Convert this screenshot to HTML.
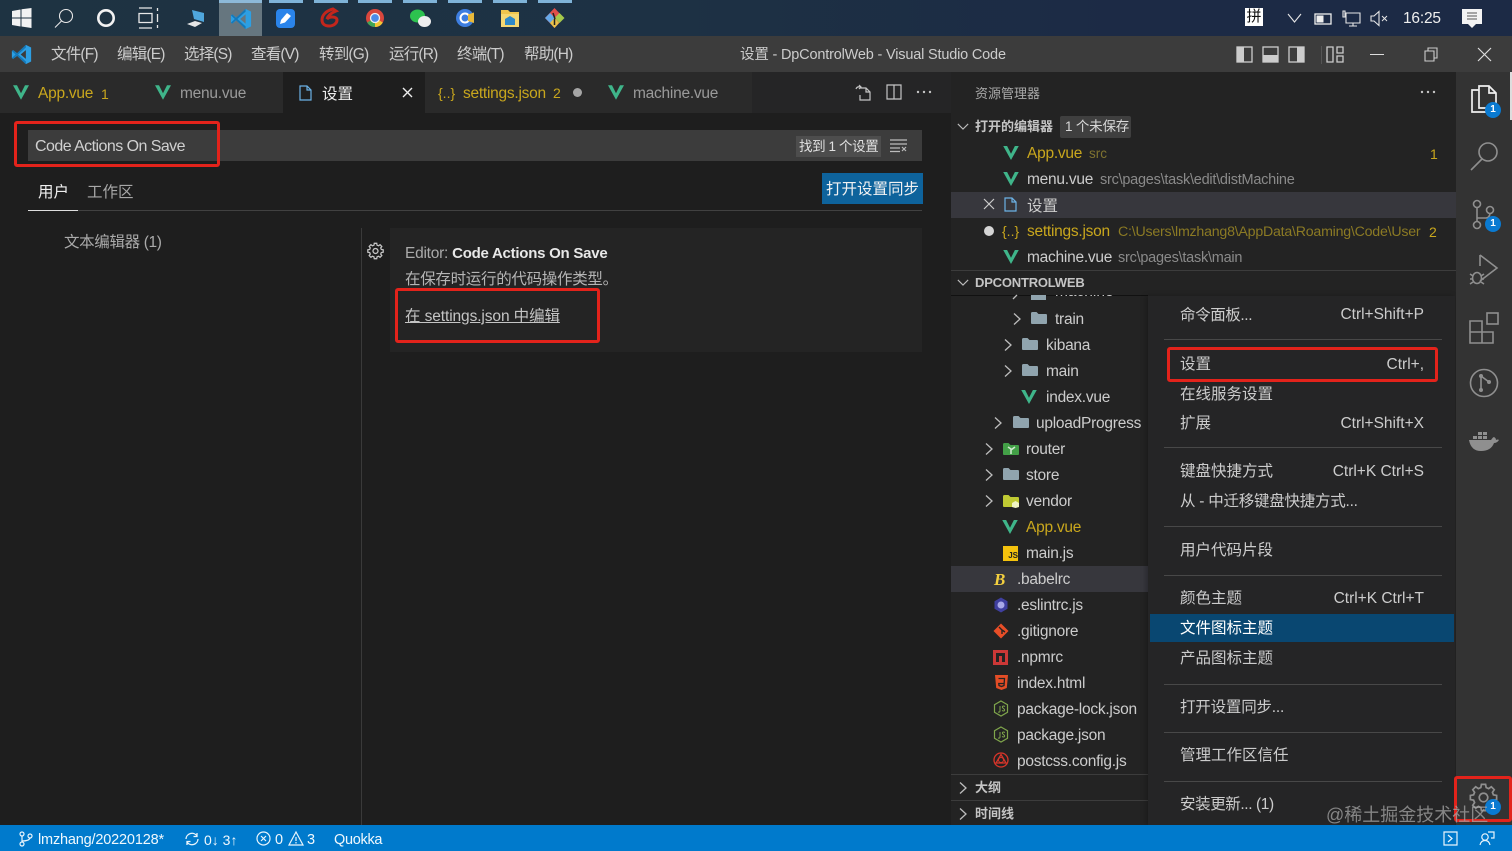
<!DOCTYPE html>
<html lang="zh-CN"><head><meta charset="utf-8"><title>设置 - DpControlWeb - Visual Studio Code</title>
<style>
html,body{margin:0;padding:0;background:#1e1e1e}
#r{position:relative;width:1512px;height:851px;overflow:hidden;background:#1e1e1e;font-family:"Liberation Sans","Noto Sans CJK SC",sans-serif;font-size:15.5px;color:#ccc}
#r div,#r svg{position:absolute}
.t{white-space:nowrap;line-height:22px;height:22px;margin-top:1px}
.y{color:#c9a71d}.d{color:#8a8a8a;font-size:14.5px}.b{font-weight:bold;font-size:13px;margin-top:0}
.k{text-align:right}
.l{letter-spacing:-.25px}
.z{margin-top:0}
.m{margin-top:0;letter-spacing:-.8px}
.c2{margin-top:2px}
.s{height:1px;background:#484848;left:1164px;width:278px}
.red{border:3.5px solid #e3231b;border-radius:3px;box-sizing:border-box}
svg{overflow:visible}
.ic{fill:none;stroke:#8f8f8f;stroke-width:1.6}
.ch{fill:none;stroke:#bdbdbd;stroke-width:1.3}
</style></head><body><div id="r">
<svg width="0" height="0" style="position:absolute"><defs>
<symbol id="v" viewBox="0 0 20 18"><path d="M0 0h5l5 10 5-10h5L10 18z" fill="#3fb58a"/></symbol>
<symbol id="f" viewBox="0 0 18 14"><path d="M1 2.5Q1 1 2.500 1h4l2 2h7.500Q17 3 17 4.500v7.500q0 1-1 1H2q-1 0-1-1z" fill="#90a4ae"/></symbol>
<symbol id="c" viewBox="0 0 10 14"><path d="M2 1.500l6 5.500-6 5.500" fill="none" stroke="#bdbdbd" stroke-width="1.300"/></symbol>
<symbol id="d" viewBox="0 0 14 10"><path d="M1 2l6 6 6-6" fill="none" stroke="#bdbdbd" stroke-width="1.300"/></symbol>
<symbol id="vs" viewBox="0 0 24 24"><path d="M17 1l6 3v16l-6 3-10-9.500L2.500 17 1 16v-8l1.500-1L7 10.500zM17 7l-6 5 6 5z" fill="#2d9fe3"/><path d="M1 8l1.500-1 14.500 13v3L1 8z" fill="#1578b8"/><path d="M1 16l1.500 1L17 4V1z" fill="#1578b8"/></symbol>
<symbol id="g" viewBox="0 0 24 24"><path d="M9.800 3.790L10.280 1.130H13.720L14.200 3.790L16.250 4.640L18.470 3.100L20.900 5.530L19.360 7.750L20.210 9.800L22.870 10.280V13.720L20.210 14.200L19.360 16.250L20.900 18.470L18.470 20.900L16.250 19.360L14.200 20.210L13.720 22.870H10.280L9.800 20.210L7.750 19.360L5.530 20.900L3.100 18.470L4.640 16.250L3.790 14.200L1.130 13.720V10.280L3.790 9.800L4.640 7.750L3.100 5.530L5.530 3.100L7.750 4.640zM12 8.500a3.500 3.500 0 1 0 .01 0z" fill="none"/></symbol>
</defs></svg>

<!-- taskbar -->
<div style="left:0;top:0;width:1512px;height:36px;background:linear-gradient(90deg,#1e3342 0%,#1d3144 45%,#1c2a45 75%,#1c2a45 100%)"></div>
<div style="left:219px;top:0;width:43px;height:36px;background:#66767f"></div>
<div style="left:219px;top:0;width:43px;height:3px;background:#8db9d8"></div>
<div style="left:269px;top:0;width:34px;height:3px;background:#7fb3d8"></div>
<div style="left:314px;top:0;width:34px;height:3px;background:#7fb3d8"></div>
<div style="left:358px;top:0;width:34px;height:3px;background:#7fb3d8"></div>
<div style="left:403px;top:0;width:34px;height:3px;background:#7fb3d8"></div>
<div style="left:448px;top:0;width:34px;height:3px;background:#7fb3d8"></div>
<div style="left:493px;top:0;width:34px;height:3px;background:#7fb3d8"></div>
<div style="left:538px;top:0;width:34px;height:3px;background:#7fb3d8"></div>
<svg style="left:12px;top:8px" width="20" height="20"><path d="M0 3l8.500-1.500V9.500H0zM9.500 1.300L19.500 0v9.500h-10zM0 10.500h8.500v8L0 17zM9.500 10.500h10V20l-10-1.500z" fill="#f2f2f2"/></svg>
<svg style="left:54px;top:8px" width="20" height="20"><circle cx="12" cy="8" r="6.500" fill="none" stroke="#e8e8e8" stroke-width="1.100"/><path d="M7.500 13L1 19.500" stroke="#e8e8e8" stroke-width="1.100"/></svg>
<svg style="left:96px;top:8px" width="20" height="20"><circle cx="10" cy="10" r="7.700" fill="none" stroke="#f2f2f2" stroke-width="2.600"/></svg>
<svg style="left:138px;top:7px" width="22" height="22"><path d="M1 1h13M1 21h13M1 6.500h13v9H1zM19.500 1v3M19.500 7v8M19.500 18v3" fill="none" stroke="#e8e8e8" stroke-width="1.300"/></svg>
<svg style="left:186px;top:9px" width="20" height="19"><path d="M6 1l12 3v9L8 10z" fill="#4fa6dc"/><path d="M1 15l8-3 7 2-7 4z" fill="#e6e6e6"/></svg>
<svg style="left:230px;top:8px" width="22" height="22"><use href="#vs"/></svg>
<div style="left:276px;top:9px;width:19px;height:19px;background:#2a84ea;border-radius:4px"></div>
<svg style="left:279px;top:12px" width="13" height="13"><path d="M1 12l1-4 6-7 4 3-6 6.500z" fill="#fff"/></svg>
<svg style="left:320px;top:8px" width="20" height="20"><path d="M13 1C6 3 2 7 2 12c0 4 3 6 7 6 5 0 8-3 8-6 0-2-2-3-5-3-2 0-4 1-5 2 1-3 4-6 9-8z" fill="none" stroke="#c3261c" stroke-width="3"/></svg>
<svg style="left:366px;top:9px" width="18" height="18"><circle cx="9" cy="9" r="9" fill="#d9473d"/><path d="M9 9L1.200 13.500A9 9 0 0 0 9 18z" fill="#3ea657"/><path d="M9 9l7.800 4.500A9 9 0 0 1 9 18z" fill="#f4c534"/><circle cx="9" cy="9" r="4.500" fill="#4b8be8" stroke="#eee" stroke-width="1.300"/></svg>
<svg style="left:410px;top:9px" width="21" height="19"><ellipse cx="7.500" cy="7" rx="7.500" ry="6.500" fill="#2dc24f"/><ellipse cx="14.500" cy="12.500" rx="6.500" ry="5.500" fill="#eeeeee"/></svg>
<svg style="left:456px;top:9px" width="18" height="18"><circle cx="9" cy="9" r="9" fill="#3d7ee0"/><circle cx="9" cy="9" r="4.500" fill="none" stroke="#fff" stroke-width="2"/><path d="M12 5.500L18 3.500V14l-6-2z" fill="#e8b93a"/></svg>
<svg style="left:501px;top:9px" width="18" height="18"><path d="M0 1h7l2 2h9v15H0z" fill="#efc54d"/><rect x="0" y="5" width="18" height="13" fill="#f4d772"/><path d="M4 16v-6l5-3 5 3v6z" fill="#2e89c9"/></svg>
<svg style="left:545px;top:8px" width="19" height="20"><path d="M9.500 0L19 10l-9.500 10L0 10z" fill="#e04f4a"/><path d="M0 10l5-5 5 5-5 5z" fill="#66a9e9"/><path d="M9.500 10l5-5 5 5-5 5z" fill="#a5c94b"/><path d="M5 15l4.500-5 4.500 5-4.500 5z" fill="#e9c24a"/><path d="M8 5l2 6M9.500 11v6" stroke="#222" stroke-width="1.500"/></svg>
<div style="left:1245px;top:8px;width:18px;height:18px;background:#fff;color:#111;font-size:15px;line-height:18px;text-align:center">拼</div>
<svg style="left:1287px;top:13px" width="15" height="10"><path d="M1 1l6.500 8L14 1" fill="none" stroke="#e6e6e6" stroke-width="1.100"/></svg>
<svg style="left:1314px;top:13px" width="18" height="12"><rect x="1" y="1" width="16" height="10" fill="none" stroke="#eee" stroke-width="1.300"/><rect x="2.500" y="2.500" width="7" height="7" fill="#eee"/></svg>
<svg style="left:1342px;top:10px" width="19" height="17"><path d="M4 3h14v10H4zM3 1v6H1V1zM11 13v3M7 16h8" fill="none" stroke="#e6e6e6" stroke-width="1.100"/></svg>
<svg style="left:1370px;top:10px" width="18" height="17"><path d="M1 6h3l5-4.500v14L4 11H1z" fill="none" stroke="#e6e6e6" stroke-width="1.100"/><path d="M12 6l5 5M17 6l-5 5" stroke="#e6e6e6" stroke-width="1"/></svg>
<div class="t" style="left:1403px;top:7px;color:#eee;font-size:15.500px;letter-spacing:-.2px">16:25</div>
<svg style="left:1462px;top:9px" width="20" height="20"><path d="M0 0h20v15h-6l-4 4-4-4H0z" fill="#f3f3f3"/><path d="M5 4h10M5 7h10M5 10h10" stroke="#555" stroke-width="1"/></svg>

<!-- title bar -->
<div style="left:0;top:36px;width:1512px;height:36px;background:#3c3c3c"></div>
<svg style="left:11px;top:44px" width="21" height="21"><use href="#vs"/></svg>
<div class="t m" style="left:51px;top:44px">文件(F)</div>
<div class="t m" style="left:117px;top:44px">编辑(E)</div>
<div class="t m" style="left:184px;top:44px">选择(S)</div>
<div class="t m" style="left:251px;top:44px">查看(V)</div>
<div class="t m" style="left:319px;top:44px">转到(G)</div>
<div class="t m" style="left:389px;top:44px">运行(R)</div>
<div class="t m" style="left:457px;top:44px">终端(T)</div>
<div class="t m" style="left:524px;top:44px">帮助(H)</div>
<div class="t z" style="left:740px;top:44px;font-size:14.500px;letter-spacing:-.18px">设置 - DpControlWeb - Visual Studio Code</div>
<svg style="left:1236px;top:46px" width="70" height="18"><rect x="1" y="1" width="15" height="15" fill="none" stroke="#ccc" stroke-width="1.300"/><rect x="1" y="1" width="7" height="15" fill="#ccc"/><rect x="27" y="1" width="15" height="15" fill="none" stroke="#ccc" stroke-width="1.300"/><rect x="27" y="9" width="15" height="7" fill="#ccc"/><rect x="53" y="1" width="15" height="15" fill="none" stroke="#ccc" stroke-width="1.300"/><rect x="61" y="1" width="7" height="15" fill="#ccc"/></svg>
<div style="left:1321px;top:46px;width:1px;height:18px;background:#555"></div>
<svg style="left:1326px;top:46px" width="18" height="18"><path d="M1 1h6v15H1zM11 1h6v6h-6zM11 10h6v6h-6z" fill="none" stroke="#ccc" stroke-width="1.300"/></svg>
<div style="left:1370px;top:54px;width:14px;height:1px;background:#ddd"></div>
<svg style="left:1424px;top:47px" width="15" height="15"><path d="M1 4h9v10H1zM4 4V1h9v10h-3" fill="none" stroke="#ccc" stroke-width="1.100"/></svg>
<svg style="left:1477px;top:47px" width="15" height="15"><path d="M1 1l13 13M14 1L1 14" stroke="#ddd" stroke-width="1.200"/></svg>

<!-- tabs -->
<div style="left:0;top:72px;width:951px;height:41px;background:#252526"></div>
<div style="left:142px;top:72px;width:1px;height:41px;background:#1e1e1e"></div>
<div style="left:283px;top:72px;width:142px;height:41px;background:#1e1e1e"></div>
<div style="left:597px;top:72px;width:155px;height:41px;background:#2a2a2a"></div>
<div style="left:142px;top:72px;width:141px;height:41px;background:#2a2a2a"></div>
<div style="left:0;top:72px;width:142px;height:41px;background:#2a2a2a"></div>
<div style="left:425px;top:72px;width:172px;height:41px;background:#2a2a2a"></div>
<svg style="left:13px;top:85px" width="16" height="15"><use href="#v"/></svg>
<div class="t y l" style="left:38px;top:82px">App.vue</div>
<div class="t y" style="left:101px;top:82px;font-size:14px">1</div>
<svg style="left:155px;top:85px" width="16" height="15"><use href="#v"/></svg>
<div class="t l" style="left:180px;top:82px;color:#9a9a9a">menu.vue</div>
<svg style="left:299px;top:85px" width="13" height="16"><path d="M1 1h7l4 4v10H1zM8 1v4h4" fill="none" stroke="#6cb2e6" stroke-width="1.200"/></svg>
<div class="t c2" style="left:322px;top:82px;color:#eee">设置</div>
<svg style="left:402px;top:87px" width="11" height="11"><path d="M1 1l9 9M10 1l-9 9" stroke="#eee" stroke-width="1.400"/></svg>
<div class="t y" style="left:438px;top:81px;font-size:14px">{..}</div>
<div class="t y l" style="left:463px;top:82px">settings.json</div>
<div class="t y" style="left:553px;top:81px;font-size:14px">2</div>
<div style="left:573px;top:88px;width:9px;height:9px;border-radius:50%;background:#a5a5a5"></div>
<svg style="left:608px;top:85px" width="16" height="15"><use href="#v"/></svg>
<div class="t l" style="left:633px;top:82px;color:#9a9a9a">machine.vue</div>
<svg style="left:854px;top:84px" width="18" height="17"><path d="M6 4h6l4 4v8H6v-5M2 5q1-3 5-2M5 1l2 2-2 2M12 4v4h4" fill="none" stroke="#c5c5c5" stroke-width="1.200"/></svg>
<svg style="left:886px;top:84px" width="16" height="16"><path d="M1 1h14v14H1zM8 1v14" fill="none" stroke="#c5c5c5" stroke-width="1.200"/></svg>
<svg style="left:916px;top:90px" width="16" height="4"><circle cx="2" cy="2" r="1.200" fill="#c5c5c5"/><circle cx="8" cy="2" r="1.200" fill="#c5c5c5"/><circle cx="14" cy="2" r="1.200" fill="#c5c5c5"/></svg>

<!-- settings editor -->
<div style="left:28px;top:130px;width:894px;height:31px;background:#3c3c3c"></div>
<div class="t" style="left:35px;top:135px;font-size:16px;color:#d0d0d0;letter-spacing:-.55px">Code Actions On Save</div>
<div style="left:796px;top:136px;width:85px;height:21px;background:#4d4d4d"></div>
<div class="t" style="left:799px;top:135px;font-size:13.500px;color:#e0e0e0;letter-spacing:-.4px">找到 1 个设置</div>
<svg style="left:890px;top:139px" width="18" height="13"><path d="M0 1h17M0 5h17M0 9h10M0 12.500h10M12 8l4 4M16 8l-4 4" stroke="#bbb" stroke-width="1.200" fill="none"/></svg>
<div style="left:822px;top:173px;width:101px;height:31px;background:#0e639c"></div>
<div class="t c2" style="left:826px;top:177px;color:#f2f2f2">打开设置同步</div>
<div class="t c2" style="left:38px;top:180px;color:#f0f0f0">用户</div>
<div class="t c2" style="left:87px;top:180px;color:#a8a8a8">工作区</div>
<div style="left:28px;top:210px;width:894px;height:1px;background:#414141"></div>
<div style="left:28px;top:210px;width:50px;height:1px;background:#dedede"></div>
<div class="t c2" style="left:64px;top:230px;color:#aaa;letter-spacing:-.35px">文本编辑器 (1)</div>
<div style="left:361px;top:228px;width:1px;height:597px;background:#3a3a3a"></div>
<div style="left:390px;top:228px;width:532px;height:124px;background:#242424"></div>
<svg style="left:367px;top:242px;stroke:#c5c5c5;stroke-width:1.800" width="17" height="18"><use href="#g"/></svg>
<div class="t" style="left:405px;top:242px;color:#aaa;letter-spacing:-.25px">Editor: <span style="color:#e8e8e8;font-weight:bold;font-size:15px">Code Actions On Save</span></div>
<div class="t c2" style="left:405px;top:267px;color:#b5b5b5;letter-spacing:-.3px">在保存时运行的代码操作类型。</div>
<div class="t c2" style="left:405px;top:304px;color:#c5c5c5;text-decoration:underline;letter-spacing:-.1px">在 settings.json 中编辑</div>
<div class="red" style="left:14px;top:121px;width:206px;height:46px"></div>
<div class="red" style="left:395px;top:288px;width:205px;height:55px"></div>

<!-- sidebar -->
<div style="left:951px;top:72px;width:505px;height:753px;background:#232323"></div>
<div class="t" style="left:975px;top:82px;font-size:13px;color:#aaa">资源管理器</div>
<svg style="left:1420px;top:90px" width="16" height="4"><circle cx="2" cy="2" r="1.200" fill="#c5c5c5"/><circle cx="8" cy="2" r="1.200" fill="#c5c5c5"/><circle cx="14" cy="2" r="1.200" fill="#c5c5c5"/></svg>
<svg style="left:957px;top:122px" width="12" height="9"><use href="#d"/></svg>
<div class="t b" style="left:975px;top:116px;color:#c4c4c4">打开的编辑器</div>
<div style="left:1060px;top:116px;width:71px;height:22px;background:#3f3f3f;border-radius:2px"></div>
<div class="t z" style="left:1065px;top:116px;font-size:13.500px;color:#d8d8d8;letter-spacing:-.2px">1 个未保存</div>
<div style="left:951px;top:192px;width:505px;height:26px;background:#37373d"></div>

<svg style="left:1003px;top:146px" width="16" height="14"><use href="#v"/></svg>
<div class="t y l" style="left:1027px;top:142px">App.vue</div><div class="t d" style="left:1089px;top:142px;color:#7f7330;font-size:13.500px">src</div>
<div class="t y" style="left:1430px;top:142px;font-size:14px">1</div>
<svg style="left:1003px;top:172px" width="16" height="14"><use href="#v"/></svg>
<div class="t l" style="left:1027px;top:168px">menu.vue</div><div class="t d l" style="left:1100px;top:168px">src\pages\task\edit\distMachine</div>
<svg style="left:983px;top:198px" width="12" height="12"><path d="M1 1l10 10M11 1L1 11" stroke="#ccc" stroke-width="1.200"/></svg>
<svg style="left:1004px;top:197px" width="13" height="15"><path d="M1 1h7l4 4v9H1zM8 1v4h4" fill="none" stroke="#6cb2e6" stroke-width="1.200"/></svg>
<div class="t c2" style="left:1027px;top:194px">设置</div>
<div style="left:984px;top:226px;width:10px;height:10px;border-radius:50%;background:#d5d5d5"></div>
<div class="t y" style="left:1002px;top:219px;font-size:14px">{..}</div>
<div class="t y l" style="left:1027px;top:220px">settings.json</div><div class="t d" style="left:1118px;top:220px;color:#8b7a24;font-size:14.200px;letter-spacing:-.23px">C:\Users\lmzhang8\AppData\Roaming\Code\User</div>
<div class="t y" style="left:1429px;top:220px;font-size:14px">2</div>
<svg style="left:1003px;top:250px" width="16" height="14"><use href="#v"/></svg>
<div class="t l" style="left:1027px;top:246px">machine.vue</div><div class="t d l" style="left:1118px;top:246px">src\pages\task\main</div>
<div style="left:951px;top:270px;width:505px;height:1px;background:#3c3c3c"></div>
<svg style="left:957px;top:278px" width="12" height="9"><use href="#d"/></svg>
<div class="t b" style="left:975px;top:272px;color:#c4c4c4;letter-spacing:-.2px">DPCONTROLWEB</div>

<!-- tree -->
<div style="left:951px;top:295px;width:197px;height:1px;background:#111"></div>
<svg style="left:1012px;top:295px" width="8" height="5"><path d="M5 0L1 4" stroke="#bdbdbd" stroke-width="1.300"/></svg>
<div style="left:1031px;top:295px;width:15px;height:5px;background:#90a4ae"></div>
<div style="left:1055px;top:295px;width:60px;height:6px;overflow:hidden"><div class="t" style="left:0;top:-15px">machine</div></div>
<svg style="left:1012px;top:312px" width="10" height="14"><use href="#c"/></svg>
<svg style="left:1030px;top:311px" width="18" height="14"><use href="#f"/></svg>
<div class="t l" style="left:1055px;top:308px">train</div>
<svg style="left:1003px;top:338px" width="10" height="14"><use href="#c"/></svg>
<svg style="left:1021px;top:337px" width="18" height="14"><use href="#f"/></svg>
<div class="t l" style="left:1046px;top:334px">kibana</div>
<svg style="left:1003px;top:364px" width="10" height="14"><use href="#c"/></svg>
<svg style="left:1021px;top:363px" width="18" height="14"><use href="#f"/></svg>
<div class="t l" style="left:1046px;top:360px">main</div>
<svg style="left:1021px;top:390px" width="16" height="14"><use href="#v"/></svg>
<div class="t l" style="left:1046px;top:386px">index.vue</div>
<svg style="left:993px;top:416px" width="10" height="14"><use href="#c"/></svg>
<svg style="left:1012px;top:415px" width="18" height="14"><use href="#f"/></svg>
<div class="t l" style="left:1036px;top:412px">uploadProgress</div>
<svg style="left:984px;top:442px" width="10" height="14"><use href="#c"/></svg>
<svg style="left:1002px;top:442px" width="18" height="14" viewBox="0 0 18 14"><path d="M1 2.500Q1 1 2.500 1h4l2 2h7.500Q17 3 17 4.500v7.500q0 1-1 1H2q-1 0-1-1z" fill="#43a047"/><path d="M9 12V7l-3-2M9 8l4-3" stroke="#cfe8cf" stroke-width="1.600" fill="none"/></svg>
<div class="t l" style="left:1026px;top:438px">router</div>
<svg style="left:984px;top:468px" width="10" height="14"><use href="#c"/></svg>
<svg style="left:1002px;top:467px" width="18" height="14"><use href="#f"/></svg>
<div class="t l" style="left:1026px;top:464px">store</div>
<svg style="left:984px;top:494px" width="10" height="14"><use href="#c"/></svg>
<svg style="left:1002px;top:494px" width="18" height="14" viewBox="0 0 18 14"><path d="M1 2.500Q1 1 2.500 1h4l2 2h7.500Q17 3 17 4.500v7.500q0 1-1 1H2q-1 0-1-1z" fill="#c0ca33"/><path d="M10 9l3.500-2 3.500 2v4l-3.500 1-3.500-1z" fill="#f0f4c3"/></svg>
<div class="t l" style="left:1026px;top:490px">vendor</div>
<svg style="left:1002px;top:520px" width="16" height="14"><use href="#v"/></svg>
<div class="t y l" style="left:1026px;top:516px">App.vue</div>
<div style="left:1003px;top:546px;width:15px;height:15px;background:#f4c20d;color:#222;font-size:8px;font-weight:bold;line-height:19px;text-align:right">JS</div>
<div class="t l" style="left:1026px;top:542px">main.js</div>
<div style="left:951px;top:566px;width:197px;height:26px;background:#37373d"></div>
<div class="t" style="left:994px;top:568px;color:#f4d03f;font-style:italic;font-weight:bold;font-family:'Liberation Serif',serif;font-size:17px">B</div>
<div class="t l" style="left:1017px;top:568px">.babelrc</div>
<svg style="left:993px;top:597px" width="16" height="16"><path d="M8 .5l6.500 3.700v7.600L8 15.500 1.500 11.800V4.200z" fill="#3f3f9f"/><circle cx="8" cy="8" r="3.500" fill="#a9a9e8"/></svg>
<div class="t l" style="left:1017px;top:594px">.eslintrc.js</div>
<svg style="left:993px;top:623px" width="16" height="16"><path d="M8 .5L15.500 8 8 15.500.5 8z" fill="#e84e27"/><path d="M6 4l3 3v4M9 7l3 2" stroke="#232323" stroke-width="1.400" fill="none"/></svg>
<div class="t l" style="left:1017px;top:620px">.gitignore</div>
<svg style="left:993px;top:650px" width="15" height="15"><rect width="15" height="15" fill="#cb3837"/><path d="M3 12V3h9v9h-3V6H6v6z" fill="#232323"/></svg>
<div class="t l" style="left:1017px;top:646px">.npmrc</div>
<svg style="left:995px;top:675px" width="13" height="15"><path d="M0 0h13l-1.200 13L6.500 15 1.200 13z" fill="#e44d26"/><path d="M3.500 3.500h6l-.5 7-2.500 1-2.500-1-.2-2h5" fill="none" stroke="#232323" stroke-width="1.300"/></svg>
<div class="t l" style="left:1017px;top:672px">index.html</div>
<svg style="left:993px;top:700px" width="16" height="17"><path d="M8 1l6.500 3.700v7.600L8 16l-6.500-3.700V4.700z" fill="none" stroke="#7fa54b" stroke-width="1.200"/><path d="M7 6v5q0 1.500-2 1M12 6.500q-2-1-2.500 0t1 2 1 2-2.500 0" fill="none" stroke="#7fa54b" stroke-width="1"/></svg>
<div class="t l" style="left:1017px;top:698px">package-lock.json</div>
<svg style="left:993px;top:726px" width="16" height="17"><path d="M8 1l6.500 3.700v7.600L8 16l-6.500-3.700V4.700z" fill="none" stroke="#7fa54b" stroke-width="1.200"/><path d="M7 6v5q0 1.500-2 1M12 6.500q-2-1-2.500 0t1 2 1 2-2.500 0" fill="none" stroke="#7fa54b" stroke-width="1"/></svg>
<div class="t l" style="left:1017px;top:724px">package.json</div>
<svg style="left:993px;top:752px" width="16" height="16"><circle cx="8" cy="8" r="7" fill="none" stroke="#d8352a" stroke-width="1.300"/><path d="M8 2.500L13 11H3z" fill="none" stroke="#d8352a" stroke-width="1.300"/><circle cx="8" cy="8" r="2.500" fill="none" stroke="#d8352a"/></svg>
<div class="t l" style="left:1017px;top:750px">postcss.config.js</div>
<div style="left:951px;top:774px;width:197px;height:1px;background:#3c3c3c"></div>
<svg style="left:958px;top:781px" width="10" height="14"><use href="#c"/></svg>
<div class="t b" style="left:975px;top:777px;color:#c4c4c4">大纲</div>
<div style="left:951px;top:800px;width:197px;height:1px;background:#3c3c3c"></div>
<svg style="left:958px;top:807px" width="10" height="14"><use href="#c"/></svg>
<div class="t b" style="left:975px;top:803px;color:#c4c4c4">时间线</div>

<!-- menu -->
<div style="left:1148px;top:296px;width:307px;height:529px;background:#252526;box-shadow:-2px 0 5px rgba(0,0,0,.25)"></div>
<div class="t c2" style="left:1180px;top:303px;letter-spacing:-.4px">命令面板...</div><div class="t k" style="right:88px;top:303px">Ctrl+Shift+P</div>
<div class="s" style="top:339px"></div>
<div class="t" style="left:1180px;top:353px">设置</div><div class="t k" style="right:88px;top:353px">Ctrl+,</div>
<div class="t" style="left:1180px;top:383px">在线服务设置</div>
<div class="t" style="left:1180px;top:412px">扩展</div><div class="t k" style="right:88px;top:412px">Ctrl+Shift+X</div>
<div class="s" style="top:447px"></div>
<div class="t" style="left:1180px;top:460px">键盘快捷方式</div><div class="t k" style="right:88px;top:460px">Ctrl+K Ctrl+S</div>
<div class="t" style="left:1180px;top:490px;letter-spacing:-.25px">从 - 中迁移键盘快捷方式...</div>
<div class="s" style="top:526px"></div>
<div class="t" style="left:1180px;top:539px">用户代码片段</div>
<div class="s" style="top:575px"></div>
<div class="t" style="left:1180px;top:587px">颜色主题</div><div class="t k" style="right:88px;top:587px">Ctrl+K Ctrl+T</div>
<div style="left:1150px;top:614px;width:304px;height:28px;background:#094771"></div>
<div class="t" style="left:1180px;top:617px;color:#fff">文件图标主题</div>
<div class="t" style="left:1180px;top:647px">产品图标主题</div>
<div class="s" style="top:684px"></div>
<div class="t c2" style="left:1180px;top:695px;letter-spacing:-.2px">打开设置同步...</div>
<div class="s" style="top:732px"></div>
<div class="t" style="left:1180px;top:744px">管理工作区信任</div>
<div class="s" style="top:781px"></div>
<div class="t" style="left:1180px;top:793px;letter-spacing:-.4px">安装更新... (1)</div>
<div class="red" style="left:1167px;top:347px;width:271px;height:35px"></div>

<!-- activity bar -->
<div style="left:1456px;top:72px;width:56px;height:753px;background:#333"></div>
<div style="left:1510px;top:72px;width:2px;height:48px;background:#ddd"></div>
<svg style="left:1470px;top:85px" width="28" height="32"><path d="M9 4V1h10l7 7v15H9zM9 5H2v22h14v-4M19 1v7h7" fill="none" stroke="#efefef" stroke-width="1.700"/></svg>
<svg style="left:1470px;top:141px" width="30" height="30"><circle cx="18" cy="11" r="9" class="ic"/><path d="M12 18L1 29" class="ic"/></svg>
<svg style="left:1472px;top:199px" width="28" height="32"><circle cx="5" cy="5" r="3.500" class="ic"/><circle cx="5" cy="26" r="3.500" class="ic"/><circle cx="18" cy="11" r="3.500" class="ic"/><path d="M5 8.500v14M5 19h9q3 0 4-4" class="ic"/></svg>
<svg style="left:1469px;top:254px" width="30" height="32"><path d="M11 1l17 13-17 13" class="ic"/><path d="M11 1v11" class="ic"/><ellipse cx="8" cy="24" rx="4.500" ry="5.500" class="ic"/><path d="M1 20l3 2M1 25h3M1 30l3-2M15 20l-3 2M15 25h-3M15 30l-3-2" class="ic"/></svg>
<svg style="left:1469px;top:312px" width="30" height="32"><path d="M1 9h12v11h11v11H1zM1 20h12v11" class="ic"/><rect x="18" y="1" width="11" height="11" class="ic"/></svg>
<svg style="left:1469px;top:368px" width="30" height="30"><circle cx="15" cy="15" r="13.500" class="ic"/><circle cx="12" cy="22" r="2" fill="#8f8f8f"/><circle cx="12" cy="8" r="2" fill="#8f8f8f"/><circle cx="20" cy="14" r="2" fill="#8f8f8f"/><path d="M12 8v14M12 8l8 6" class="ic"/></svg>
<svg style="left:1469px;top:430px" width="30" height="22"><path d="M0 10h22q2-3 3-3 2 1 2 3 2-1 3 0-2 3-5 3-3 8-13 8Q2 21 0 10z" fill="#8f8f8f"/><path d="M4 6h4v3H4zM9 6h4v3H9zM14 6h4v3h-4zM9 2h4v3H9zM14 2h4v3h-4z" fill="#8f8f8f"/></svg>
<svg style="left:1469px;top:783px;stroke:#8f8f8f;stroke-width:1.400" width="29" height="29"><use href="#g"/></svg>
<div style="left:1485px;top:102px;width:16px;height:16px;border-radius:50%;background:#0a7ad1;color:#fff;font-size:10px;font-weight:bold;text-align:center;line-height:16px">1</div>
<div style="left:1485px;top:216px;width:16px;height:16px;border-radius:50%;background:#0a7ad1;color:#fff;font-size:10px;font-weight:bold;text-align:center;line-height:16px">1</div>
<div style="left:1485px;top:799px;width:16px;height:16px;border-radius:50%;background:#0a7ad1;color:#fff;font-size:10px;font-weight:bold;text-align:center;line-height:16px">1</div>
<div class="red" style="left:1454px;top:776px;width:58px;height:46px"></div>

<!-- status bar -->
<div style="left:0;top:825px;width:1512px;height:26px;background:#007acc"></div>
<svg style="left:19px;top:831px" width="14" height="16"><circle cx="3" cy="3" r="2" fill="none" stroke="#eaf5fc" stroke-width="1.200"/><circle cx="3" cy="13" r="2" fill="none" stroke="#eaf5fc" stroke-width="1.200"/><circle cx="11" cy="5" r="2" fill="none" stroke="#eaf5fc" stroke-width="1.200"/><path d="M3 5v6M3 10q7 0 8-3" fill="none" stroke="#eaf5fc" stroke-width="1.200"/></svg>
<div class="t" style="left:38px;top:828px;color:#f0f8fd;font-size:14.500px;letter-spacing:-.18px">lmzhang/20220128*</div>
<svg style="left:184px;top:832px" width="16" height="14"><path d="M2 7a6 6 0 0 1 11-3M14 7a6 6 0 0 1-11 3M13 1v3.500h-3.500M3 13V9.500h3.500" fill="none" stroke="#eaf5fc" stroke-width="1.300"/></svg>
<div class="t" style="left:204px;top:828px;color:#f0f8fd;font-size:14px">0↓ 3↑</div>
<svg style="left:256px;top:831px" width="15" height="15"><circle cx="7.500" cy="7.500" r="6.500" fill="none" stroke="#eaf5fc" stroke-width="1.200"/><path d="M5 5l5 5M10 5l-5 5" stroke="#eaf5fc" stroke-width="1.200"/></svg>
<div class="t" style="left:275px;top:828px;color:#f0f8fd;font-size:14.500px">0</div>
<svg style="left:288px;top:831px" width="16" height="15"><path d="M8 1l7 13H1zM8 6v4M8 11v1.500" fill="none" stroke="#eaf5fc" stroke-width="1.200"/></svg>
<div class="t" style="left:307px;top:828px;color:#f0f8fd;font-size:14.500px">3</div>
<div class="t" style="left:334px;top:828px;color:#f0f8fd;font-size:14.500px;letter-spacing:-.3px">Quokka</div>
<svg style="left:1443px;top:831px" width="15" height="15"><path d="M1 1h13v13H1zM5 4l4 3.500L5 11" fill="none" stroke="#eaf5fc" stroke-width="1.200"/></svg>
<svg style="left:1479px;top:831px" width="16" height="15"><circle cx="6" cy="6" r="3.200" fill="none" stroke="#eaf5fc" stroke-width="1.200"/><path d="M1 14q1-4.500 5-4.500t5 4.500M9 1h6v6h-3" fill="none" stroke="#eaf5fc" stroke-width="1.200"/></svg>

<div class="t z" style="left:1326px;top:804px;color:rgba(165,165,165,.75);font-size:18px">@稀土掘金技术社区</div>
</div></body></html>
